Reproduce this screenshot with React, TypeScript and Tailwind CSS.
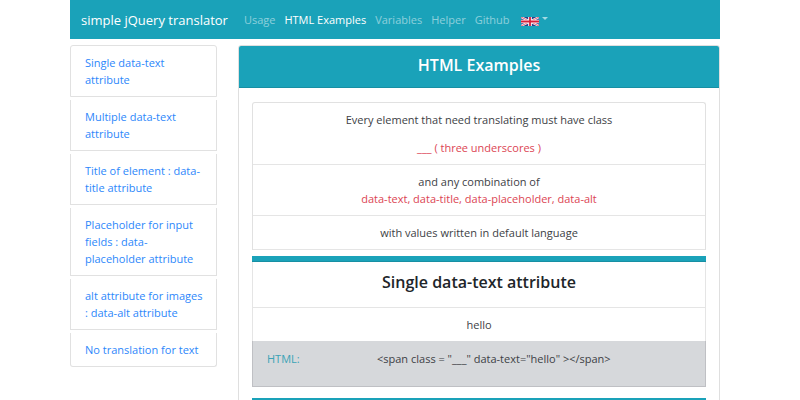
import type { ReactNode } from "react";

const navLinks = [
  { label: "Usage", active: false },
  { label: "HTML Examples", active: true },
  { label: "Variables", active: false },
  { label: "Helper", active: false },
  { label: "Github", active: false },
];

const topics = [
  "Single data-text attribute",
  "Multiple data-text attribute",
  "Title of element : data-title attribute",
  "Placeholder for input fields : data-placeholder attribute",
  "alt attribute for images : data-alt attribute",
  "No translation for text",
];

function Flag() {
  return (
    <svg viewBox="0 0 60 30" preserveAspectRatio="none" className="h-[9px] w-[18px]" aria-hidden="true">
      <path d="M0 0h60v30H0z" fill="#27408b" />
      <path d="M0 0l60 30M60 0L0 30" stroke="#fff" strokeWidth="7" />
      <path d="M0 0l60 30M60 0L0 30" stroke="#d8203a" strokeWidth="2.5" />
      <path d="M30 0v30M0 15h60" stroke="#fff" strokeWidth="12" />
      <path d="M30 0v30M0 15h60" stroke="#d8203a" strokeWidth="6" />
    </svg>
  );
}

function Navbar() {
  return (
    <nav className="flex h-[39px] items-center bg-[#1aa2b9] px-[11px]">
      <a href="#" className="mr-4 text-[13px] leading-5 whitespace-nowrap text-white">
        simple jQuery translator
      </a>
      <ul className="flex items-center gap-[9px]">
        {navLinks.map((link) => (
          <li key={link.label}>
            <a
              href="#"
              className={link.active ? "whitespace-nowrap text-white" : "whitespace-nowrap text-white/50"}
            >
              {link.label}
            </a>
          </li>
        ))}
        <li className="flex">
          <button type="button" aria-label="Language" aria-haspopup="menu" className="flex items-start gap-[3px] pt-[3px] pl-0.5">
            <Flag />
            <svg viewBox="0 0 6 3" className="h-[3px] w-[6px]" aria-hidden="true">
              <path d="M0 0h6L3 3z" fill="#fff" fillOpacity="0.6" />
            </svg>
          </button>
        </li>
      </ul>
    </nav>
  );
}

function Sidebar() {
  return (
    <aside className="w-[147px] shrink-0">
      <ul className="flex flex-col gap-[3px]">
        {topics.map((topic) => (
          <li
            key={topic}
            className="border-x border-b border-[#e1e1e1] py-2 pr-2 pl-[14px] first:rounded-t-[3px] first:border-t last:rounded-b-[3px]"
          >
            <a href="#" className="block text-[#2d87fb]">
              {topic}
            </a>
          </li>
        ))}
      </ul>
    </aside>
  );
}

function Row({ children }: { children: ReactNode }) {
  return <li className="border-b border-[#e5e5e5] px-[14px] py-2">{children}</li>;
}

function Bar() {
  return <div className="h-1.5 border-b border-[#178fa3] bg-[#1aa2b9]" />;
}

export default function App() {
  return (
    <div className="h-screen overflow-hidden bg-white pr-20 pl-[70px] font-['Open_Sans','Noto_Sans',sans-serif] text-[11px] leading-[17px] text-[#3d4145]">
      <Navbar />
      <div className="mt-1.5 flex items-start gap-[21px]">
        <Sidebar />
        <main className="min-w-0 flex-1 rounded-t-[3px] border border-[#dfdfdf]">
          <header className="h-[42px] rounded-t-[2px] border-b border-[#178fa3] bg-[#1aa2b9] pt-2 text-center">
            <h1 className="text-[16px] leading-[22px] font-semibold text-white">HTML Examples</h1>
          </header>
          <div className="px-[13px] pt-[14px] pb-6 text-center">
            <ul className="mb-1.5 rounded-t-[3px] border-x border-t border-[#e1e1e1]">
              <Row>
                <p className="mb-[11px]">Every element that need translating must have class</p>
                <p className="text-[#dc4553]">___ ( three underscores )</p>
              </Row>
              <Row>
                <p>and any combination of</p>
                <p className="text-[#dc4553]">data-text, data-title, data-placeholder, data-alt</p>
              </Row>
              <Row>
                <p>with values written in default language</p>
              </Row>
            </ul>
            <section className="mb-[11px]">
              <Bar />
              <div className="border-x border-[#e5e5e5]">
                <h2 className="border-b border-[#e5e5e5] pt-[9px] pb-[14px] text-[16px] leading-[22px] font-semibold text-[#212529]">
                  Single data-text attribute
                </h2>
                <p className="py-2">hello</p>
              </div>
              <div className="flex h-[46px] border-r border-b border-l border-[#bfc0c4] bg-[#d6d8db] px-[14px] pt-[9px] text-left">
                <span className="w-1/4 text-[#3ba3b6]">HTML:</span>
                <code className="pl-1 font-[inherit]">{'<span class = "___" data-text="hello" ></span>'}</code>
              </div>
            </section>
            <Bar />
          </div>
        </main>
      </div>
    </div>
  );
}
